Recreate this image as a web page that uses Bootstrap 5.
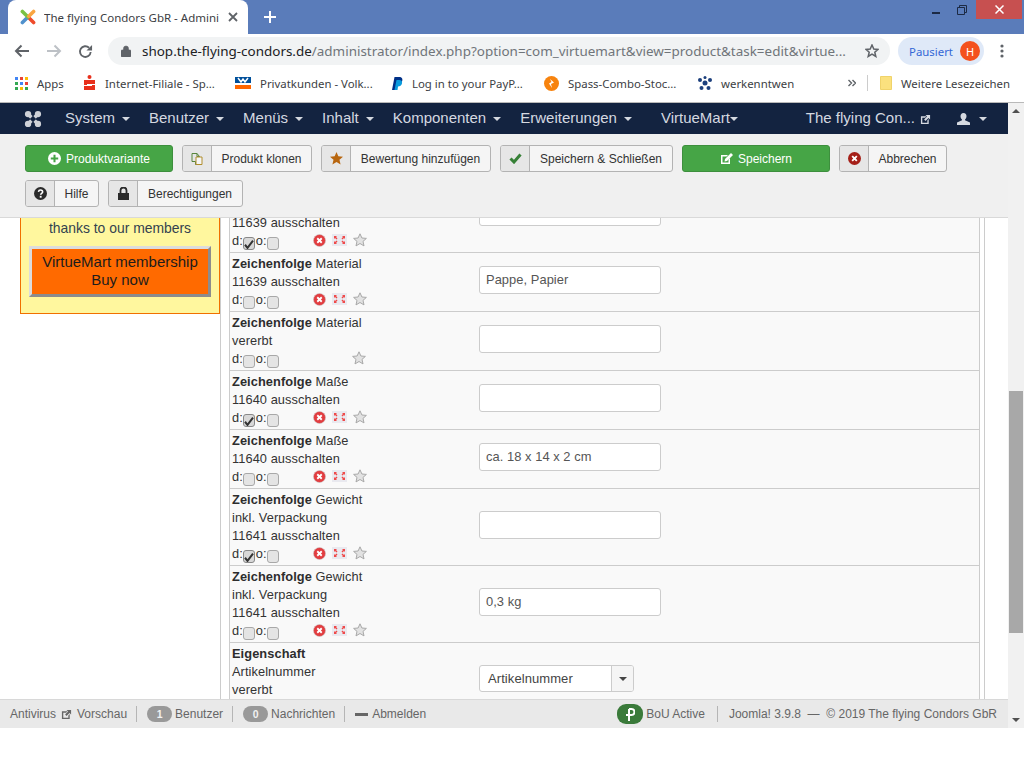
<!DOCTYPE html>
<html lang="de">
<head>
<meta charset="utf-8">
<title>The flying Condors GbR - Administration</title>
<link href="https://cdn.jsdelivr.net/npm/bootstrap@5.3.0/dist/css/bootstrap.min.css" rel="stylesheet">
<style>
html,body{margin:0;height:768px;overflow:hidden;background:#fff}
body{font-family:"Liberation Sans",Arial,sans-serif;font-size:12.8px;color:#333;line-height:1.5}
svg{flex:none}
.shell{width:1024px;height:728px}
.tabstrip{height:34px;background:#5a7cba}
.tabitem{width:240px;height:34px;margin-left:8px;background:#fff;border-radius:8px 8px 0 0;padding:0 10px 0 12px;font:11.5px "Noto Sans",sans-serif;color:#3c4043;flex:none}
.tabtitle{width:180px;white-space:nowrap;overflow:hidden;margin-left:8px;margin-right:4px}
.newtab{margin-left:16px;margin-right:auto}
.wincontrols{height:19px;align-self:flex-start}
.winmin{margin:6px 17px 0 0}
.winclose{width:46px;height:19px;background:#c75050;margin:0 2px 0 9px}
.toolbar-c{height:34px;padding:0 20px 0 14px;background:#fff}
.omnibox{width:782px;height:28px;background:#f1f3f4;border-radius:14px;margin-left:15px;padding:0 11px 0 13px;font:13.45px "Noto Sans",sans-serif;color:#70757a;white-space:nowrap;flex:none}
.omnibox b{font-weight:400;color:#202124}
.urltext{width:712px;margin-left:11px}
.pausedpill{width:86px;height:28px;border-radius:14px;background:#dfe9f8;color:#3367d6;font:11.4px "Noto Sans",sans-serif;margin-left:8px;padding:0 4px 0 11px;flex:none}
.avatar{width:20px;height:20px;border-radius:50%;background:#f4511e;color:#fff;font-size:11px}
.bookmarks{height:35px;padding:0 0 4px 15px;border-bottom:1px solid #b9b9b9;background:#fff;font:11.4px "Noto Sans",sans-serif;color:#3c4043;white-space:nowrap}
.bookmark-a{width:152px}.bookmark-b{width:157px}.bookmark-c{width:152px}.bookmark-d{width:154px}.bookmark-e{width:150px}
.bookmark-apps{width:68px}
.bookmarks svg{margin-right:9px}
.bookmark-sep{width:1px;height:16px;background:#ccc;margin:0 12px 0 2px}
.appcol{width:1008px}
.scrolltrack{width:16px;height:625px;background:#f1f1f1}
.scrollarrow{height:16px;font-size:0}
.scrollthumb{width:14px;height:242px;background:#a8a8a8;margin:272px 1px 79px}
.topnav{height:31px;background:#132340;color:#d5d9e0;font-size:15px;gap:19px;white-space:nowrap}
.topnav .joomla-mark{margin-right:4px;color:#cfd2d8}
.caret-down{display:inline-block;width:0;height:0;border:4px solid transparent;border-top-color:currentColor;border-bottom-width:0;margin-left:7px;vertical-align:middle}
.nav-vm{margin-left:10px}
.nav-site{margin-left:auto;margin-right:7px}
.nav-user{margin-right:21px}
.nav-user .caret-down{margin-left:9px}
.nav-vm .caret-down{margin-left:0}
.nav-site svg{margin-left:5px}
.actionbar{height:84px;background:#f0f0f0;border-bottom:1px solid #d9d9d9;padding:11px 0 0 25px;gap:8px 9px;align-content:flex-start}
.actbtn{height:27px;padding:0;display:flex;align-items:center;font-size:12px;line-height:1;color:#333;background:#f5f5f5;border:1px solid #b3b3b3;border-radius:3px;overflow:hidden;--bs-btn-font-size:12px}
.actbtn .icn{width:29px;height:100%;background:#e6e6e6;border-right:1px solid #b3b3b3;display:flex;align-items:center;justify-content:center;flex:none}
.actbtn .lbl{flex:1;text-align:center}
.actbtn.go{background:#46a546;border-color:#3d8f3d;color:#fff;justify-content:center;gap:5px;width:148px}
.w-clone{width:130px}.w-rate{width:170px}.w-save{width:173px}.w-cancel{width:108px}.w-help{width:74px}.w-perm{width:135px}
.workarea{height:481px;overflow:hidden;background:#fff}
.sidecol{width:221px;padding-left:20px;border-right:1px solid #ccc;flex:none}
.promo{width:200px;height:96px;background:#fff79e;border:1px solid #f07000;border-top:0;text-align:center;font-size:13.9px;line-height:20px;color:#33424f}
.promo-buy{display:block;width:182px;height:51px;margin:8px auto 0;background:#ff6a00;border:3px solid;border-color:#dcdcdc #8c8c8c #8c8c8c #dcdcdc;color:#1c1c1c;font-size:15px;line-height:18px;padding:4px 0}
.fieldcol{margin-left:8px;width:751px;border:1px solid #ccc;border-width:0 1px;background:#f9f9f9;flex:none}
.gutter{width:5px;border-right:1px solid #ccc;flex:none}
.fieldrow{display:flex;align-items:center;padding:0 0 4px 2px;border-bottom:1px solid #ccc;line-height:18px;flex:none;letter-spacing:.08px}
.r59{height:59px}.r77{height:77px}
.scrolled-off{margin-top:-42px}
.fieldlabel{width:247px;flex:none;color:#333;margin-top:4px}
.fieldlabel strong{color:#2d2d2d}
.flagline{display:flex;align-items:center;height:18px}
.flagline .form-check-input{width:12px;height:13px;margin:4px 1px 0 0;background-color:#e4e4e4;border:1px solid #a8a8a8;border-radius:3px;float:none;flex:none;box-shadow:none}
.flagline .form-check-input:checked{background-color:#d8d8d8;border-color:#888;background-size:12px;background-image:url("data:image/svg+xml,%3Csvg xmlns='http://www.w3.org/2000/svg' viewBox='0 0 12 12'%3E%3Cpath d='M2 7l2.500 3L10 3' fill='none' stroke='%23333' stroke-width='2'/%3E%3C/svg%3E")}
.flagicons{display:flex;align-items:center;gap:6px;margin-left:33px;margin-top:-2px}
.flagicons.staronly{margin-left:72px}
.fieldtext{width:182px;height:28px;min-height:0;border:1px solid #ccc;border-radius:3px;padding:0 6px 2px;font-size:12.9px;color:#555;background:#fff;letter-spacing:.05px;flex:none}
.fieldselect{width:155px;height:27px;border:1px solid #ccc;border-radius:3px;background:#fff;color:#444;font-size:13px;overflow:hidden;margin-top:-1px;flex:none}
.fieldselect .sel-val{flex:1;padding-left:8px}
.fieldselect .sel-arrow{width:22px;height:100%;background:#f5f5f5;border-left:1px solid #ccc;color:#444}
.fieldselect .caret-down{margin:0}
.statusline{height:29px;background:#e9e9e9;border-top:1px solid #d8d8d8;color:#666;font-size:12px;padding:0 11px 0 10px;white-space:nowrap}
.vbar{width:1px;height:16px;background:#b5b5b5;margin:0 9px}
.vbar-wide{margin:0 11px 0 12px}
.ext-status{margin:0 5px}
.stat-pill{background:#999;color:#f2f2f2;font-size:10.5px;font-weight:700;width:25px;padding:3px 0;border-radius:9px;margin-right:3px;margin-left:1px}
.bou-pill{width:26px;height:20px;background:#3a7a3a;border-radius:9px;margin-right:3px}
.minusbar{width:13px;height:3px;background:#666;margin:0 4px 0 1px}
.whitefoot{height:40px;background:#fff}
</style>
</head>
<body>
<svg width="0" height="0" class="position-absolute">
<defs>
<symbol id="i-del" viewBox="0 0 14 14"><circle cx="7" cy="7" r="6.500" fill="#e23d40" stroke="#c9c9c9" stroke-width=".6"/><path d="M4.600 4.600l4.800 4.800M9.400 4.600l-4.800 4.800" stroke="#fff" stroke-width="2"/></symbol>
<symbol id="i-fuse" viewBox="0 0 15 12"><rect width="15" height="12" fill="#e9e9ef"/><path d="M2 2h3L4 3l1.500 1.500-1 1L3 4 2 5zM13 2h-3l1 1-1.500 1.500 1 1L12 4l1 1zM2 10h3L4 9l1.500-1.500-1-1L3 8 2 7zM13 10h-3l1-1-1.500-1.500 1-1L12 8l1-1z" fill="#ef4a4a"/></symbol>
<symbol id="i-star" viewBox="0 0 14 14"><path d="M7 .8l1.900 4.200 4.500.4-3.400 3 1 4.500L7 10.500 3 12.900l1-4.500-3.400-3 4.500-.4z" fill="#e2e2e2" stroke="#a8a8a8"/></symbol>
<symbol id="i-ext" viewBox="0 0 12 12"><path d="M1 2.500h6L5.500 4H2.500v5.500h5.500V7L9.500 5.500V11H1zM6 1h5v5L9.300 4.300 6 7.500 4.500 6l3.200-3.300z" fill="currentColor"/></symbol>
</defs>
</svg>
<div class="shell">
  <div class="tabstrip d-flex align-items-center">
    <div class="tabitem d-flex align-items-center">
      <svg width="16" height="16" viewBox="0 0 20 20"><g stroke-width="4.500" stroke-linecap="round"><path d="M17 17l-6-6" stroke="#ef4b2b"/><path d="M3 17l6-6" stroke="#5091cd"/><path d="M3 3l7 7" stroke="#7ac143"/><path d="M17 3l-6 6" stroke="#f9a541"/></g></svg>
      <span class="tabtitle">The flying Condors GbR - Admini</span>
      <svg width="10" height="10" viewBox="0 0 10 10"><path d="M1 1l8 8M9 1l-8 8" stroke="#5f6368" stroke-width="1.800"/></svg>
    </div>
    <svg class="newtab" width="12" height="12" viewBox="0 0 12 12"><path d="M6 0v12M0 6h12" stroke="#fff" stroke-width="2"/></svg>
    <div class="wincontrols d-flex align-items-center">
      <svg class="winmin" width="8" height="2" viewBox="0 0 8 2"><rect width="8" height="2" fill="#1c2a44"/></svg>
      <svg width="10" height="10" viewBox="0 0 10 10"><path d="M.5 2.500h7v7h-7zM2.500 2.500v-2h7v7h-2" fill="none" stroke="#1c2a44"/></svg>
      <div class="winclose d-flex align-items-center justify-content-center"><svg width="9" height="9" viewBox="0 0 9 9"><path d="M.5.500l8 8M8.500.500l-8 8" stroke="#fff" stroke-width="1.500"/></svg></div>
    </div>
  </div>
  <div class="toolbar-c d-flex align-items-center">
    <svg width="16" height="14" viewBox="0 0 16 14" class="me-3"><path d="M15 7H2M7.500 1.500L2 7l5.500 5.500" fill="none" stroke="#5f6368" stroke-width="2"/></svg>
    <svg width="16" height="14" viewBox="0 0 16 14" class="me-3"><path d="M1 7h13M8.500 1.500L14 7l-5.500 5.500" fill="none" stroke="#bdc1c6" stroke-width="2"/></svg>
    <svg width="15" height="15" viewBox="0 0 16 16"><path d="M13.500 8.500A5.700 5.700 0 1 1 11.800 4" fill="none" stroke="#5f6368" stroke-width="2"/><path d="M15 1v6H9z" fill="#5f6368"/></svg>
    <div class="omnibox d-flex align-items-center">
      <svg width="10" height="12" viewBox="0 0 10 12"><path d="M1 5h8a1 1 0 0 1 1 1v5a1 1 0 0 1-1 1H1a1 1 0 0 1-1-1V6a1 1 0 0 1 1-1zM2.500 5V3.500a2.500 2.500 0 0 1 5 0V5" fill="#5f6368" stroke="#5f6368" stroke-width=".6"/></svg>
      <span class="urltext"><b>shop.the-flying-condors.de</b>/administrator/index.php?option=com_virtuemart&amp;view=product&amp;task=edit&amp;virtue...</span>
      <svg class="ms-auto" width="14" height="14" viewBox="0 0 14 14"><path d="M7 1l1.800 4 4.200.4-3.200 2.800 1 4.300L7 10.200l-3.800 2.300 1-4.300L1 5.400 5.200 5z" fill="none" stroke="#5f6368" stroke-width="1.500"/></svg>
    </div>
    <div class="pausedpill d-flex align-items-center justify-content-between"><span>Pausiert</span><span class="avatar d-flex align-items-center justify-content-center">H</span></div>
    <svg class="ms-auto" width="4" height="14" viewBox="0 0 4 14"><circle cx="2" cy="2" r="1.600" fill="#5f6368"/><circle cx="2" cy="7" r="1.600" fill="#5f6368"/><circle cx="2" cy="12" r="1.600" fill="#5f6368"/></svg>
  </div>
  <div class="bookmarks d-flex align-items-center">
    <div class="bookmark-apps d-flex align-items-center">
      <svg width="13" height="13" viewBox="0 0 13 13"><g fill="#4285f4"><rect width="3" height="3"/><rect x="5" y="5" width="3" height="3"/></g><g fill="#ea4335"><rect x="5" width="3" height="3"/><rect x="10" y="5" width="3" height="3"/></g><g fill="#fbbc05"><rect x="10" width="3" height="3"/><rect x="5" y="10" width="3" height="3"/></g><g fill="#34a853"><rect y="5" width="3" height="3"/><rect y="10" width="3" height="3"/><rect x="10" y="10" width="3" height="3"/></g></svg>
      <span>Apps</span>
    </div>
    <div class="bookmark-a d-flex align-items-center">
      <svg width="13" height="16" viewBox="0 0 13 16"><circle cx="6.500" cy="2" r="2" fill="#e8301c"/><path d="M1 5h11v4H4v1h8v5H1v-4h8v-1H1z" fill="#e8301c"/></svg>
      <span>Internet-Filiale - Sp...</span>
    </div>
    <div class="bookmark-b d-flex align-items-center">
      <svg width="16" height="12" viewBox="0 0 16 12"><rect width="16" height="6" fill="#00509b"/><rect y="8" width="16" height="4" fill="#f60"/><path d="M3 1l3 4 2-3 2 3 3-4" fill="none" stroke="#fff" stroke-width="1.500"/></svg>
      <span>Privatkunden - Volk...</span>
    </div>
    <div class="bookmark-c d-flex align-items-center">
      <svg width="11" height="13" viewBox="0 0 11 13"><path d="M2.500 0H7c3 0 4 2 3 4.500C9 7 7 7.500 5 7.500L4 13H0z" fill="#003087"/><path d="M4.500 3h3C9 3 10.500 4 10 6.500 9.500 8.500 8 9.500 6 9.500L5.500 13H2.500z" fill="#0a9bdd"/></svg>
      <span>Log in to your PayP...</span>
    </div>
    <div class="bookmark-d d-flex align-items-center">
      <svg width="15" height="15" viewBox="0 0 15 15"><circle cx="7.500" cy="7.500" r="7.500" fill="#f7830e"/><path d="M6 3l4 3.500L7 8l1 4-3-4.500 2.500-1.500z" fill="#fff"/></svg>
      <span>Spass-Combo-Stoc...</span>
    </div>
    <div class="bookmark-e d-flex align-items-center">
      <svg width="14" height="14" viewBox="0 0 14 14"><g fill="#1c3f7c"><circle cx="7" cy="7" r="2.500"/><circle cx="2" cy="4" r="2"/><circle cx="12" cy="4" r="2"/><circle cx="3.500" cy="12" r="2"/><circle cx="10.500" cy="12" r="2"/><circle cx="7" cy="1.500" r="1.500"/></g></svg>
      <span>werkenntwen</span>
    </div>
    <svg width="8" height="8" viewBox="0 0 8 8"><path d="M.5 1l3 3-3 3M4.500 1l3 3-3 3" fill="none" stroke="#5f6368" stroke-width="1.400"/></svg>
    <span class="bookmark-sep"></span>
    <svg width="12" height="14" viewBox="0 0 12 14"><path d="M.5.500h11v13H.5z" fill="#fbe17e" stroke="#f0d36a"/></svg>
    <span>Weitere Lesezeichen</span>
  </div>
  <div class="d-flex">
    <div class="appcol">
      <nav class="topnav navbar p-0 ps-4 justify-content-start flex-nowrap">
        <svg class="joomla-mark" width="18" height="18" viewBox="0 0 20 20"><g fill="currentColor"><circle cx="4.500" cy="4.500" r="3.500"/><circle cx="15.500" cy="4.500" r="3.500"/><circle cx="4.500" cy="15.500" r="3.500"/><circle cx="15.500" cy="15.500" r="3.500"/></g><path d="M4.500 4.500l11 11M15.500 4.500l-11 11" stroke="currentColor" stroke-width="4"/><path d="M10 6.500L13.500 10 10 13.500 6.500 10z" fill="#132340"/></svg>
        <span>System<span class="caret-down"></span></span>
        <span>Benutzer<span class="caret-down"></span></span>
        <span>Menüs<span class="caret-down"></span></span>
        <span>Inhalt<span class="caret-down"></span></span>
        <span>Komponenten<span class="caret-down"></span></span>
        <span>Erweiterungen<span class="caret-down"></span></span>
        <span class="nav-vm">VirtueMart<span class="caret-down"></span></span>
        <span class="nav-site">The flying Con...<svg width="11" height="11"><use href="#i-ext"/></svg></span>
        <span class="nav-user"><svg width="13" height="12" viewBox="0 0 13 12"><path d="M6.500 0C8.500 0 9.500 1.500 9.500 3.200c0 1.600-.8 2.800-1.500 3.300v.8L13 9.500V12H0V9.500l5-2.200v-.8C4.300 6 3.500 4.800 3.500 3.200 3.500 1.500 4.500 0 6.500 0z" fill="currentColor"/></svg><span class="caret-down"></span></span>
      </nav>
      <div class="actionbar d-flex flex-wrap">
        <button type="button" class="btn actbtn go"><svg width="13" height="13" viewBox="0 0 14 14"><circle cx="7" cy="7" r="7" fill="#fff"/><path d="M7 3v8M3 7h8" stroke="#46a546" stroke-width="2.200"/></svg>Produktvariante</button>
        <button type="button" class="btn actbtn w-clone"><span class="icn"><svg width="12" height="12" viewBox="0 0 12 12"><path d="M1 .5h5v3h2.500v8H4.500v-3H1zM6 .5L8.500 3.500" fill="none" stroke="#56843c"/><path d="M5 4h6v7.500H5z" fill="#f5f5f5" stroke="#b08d2c"/></svg></span><span class="lbl">Produkt klonen</span></button>
        <button type="button" class="btn actbtn w-rate"><span class="icn"><svg width="13" height="13" viewBox="0 0 14 14"><path d="M7 0l2 4.700 5 .4-3.800 3.300L11.400 13.500 7 10.800l-4.400 2.700 1.200-5.100L0 5.100l5-.4z" fill="#b8660f"/></svg></span><span class="lbl">Bewertung hinzufügen</span></button>
        <button type="button" class="btn actbtn w-save"><span class="icn"><svg width="13" height="11" viewBox="0 0 13 11"><path d="M1.500 5.500l3.500 3.500 6.500-7.500" fill="none" stroke="#378137" stroke-width="3"/></svg></span><span class="lbl">Speichern &amp; Schließen</span></button>
        <button type="button" class="btn actbtn go"><svg width="13" height="12" viewBox="0 0 13 12"><path d="M1 2h7L6.500 3.500H2.500v6h6V6.500L10 5v6H1z" fill="#fff"/><path d="M5 6l6-6 2 2-6 6-2.500.5z" fill="#fff"/></svg>Speichern</button>
        <button type="button" class="btn actbtn w-cancel"><span class="icn"><svg width="13" height="13" viewBox="0 0 14 14"><circle cx="7" cy="7" r="7" fill="#a51f18"/><path d="M4.500 4.500l5 5M9.500 4.500l-5 5" stroke="#fff" stroke-width="2"/></svg></span><span class="lbl">Abbrechen</span></button>
        <button type="button" class="btn actbtn w-help"><span class="icn"><svg width="13" height="13" viewBox="0 0 14 14"><circle cx="7" cy="7" r="7" fill="#2b2b2b"/><path d="M4.800 5.200C5 3.800 6 3.300 7 3.300c1.300 0 2.300.8 2.300 2 0 1.500-2.100 1.500-2.100 3" fill="none" stroke="#fff" stroke-width="1.700"/><rect x="6.200" y="9.500" width="2" height="2" fill="#fff"/></svg></span><span class="lbl">Hilfe</span></button>
        <button type="button" class="btn actbtn w-perm"><span class="icn"><svg width="11" height="13" viewBox="0 0 11 13"><path d="M0 6h11v7H0z" fill="#2b2b2b"/><path d="M2.500 6V3.500a3 3 0 0 1 6 0V6" fill="none" stroke="#2b2b2b" stroke-width="1.800"/></svg></span><span class="lbl">Berechtigungen</span></button>
      </div>
      <div class="workarea d-flex">
        <aside class="sidecol">
          <div class="promo">
            <div>thanks to our members</div>
            <span class="promo-buy">VirtueMart membership<br>Buy now</span>
          </div>
        </aside>
        <main class="fieldcol d-flex flex-column">
          <div class="fieldrow r77 scrolled-off">
            <div class="fieldlabel">
              <div>&nbsp;</div>
              <div>&nbsp;</div>
              <div>11639 ausschalten</div>
              <div class="flagline">d:<input class="form-check-input" type="checkbox" checked aria-label="d">o:<input class="form-check-input" type="checkbox" aria-label="o"><span class="flagicons"><svg width="13" height="13"><use href="#i-del"/></svg><svg width="15" height="12"><use href="#i-fuse"/></svg><svg width="14" height="14"><use href="#i-star"/></svg></span></div>
            </div>
            <input class="form-control fieldtext" type="text" aria-label="Wert">
          </div>
          <div class="fieldrow r59">
            <div class="fieldlabel">
              <div><strong>Zeichenfolge</strong> Material</div>
              <div>11639 ausschalten</div>
              <div class="flagline">d:<input class="form-check-input" type="checkbox" aria-label="d">o:<input class="form-check-input" type="checkbox" aria-label="o"><span class="flagicons"><svg width="13" height="13"><use href="#i-del"/></svg><svg width="15" height="12"><use href="#i-fuse"/></svg><svg width="14" height="14"><use href="#i-star"/></svg></span></div>
            </div>
            <input class="form-control fieldtext" type="text" value="Pappe, Papier" aria-label="Wert">
          </div>
          <div class="fieldrow r59">
            <div class="fieldlabel">
              <div><strong>Zeichenfolge</strong> Material</div>
              <div>vererbt</div>
              <div class="flagline">d:<input class="form-check-input" type="checkbox" aria-label="d">o:<input class="form-check-input" type="checkbox" aria-label="o"><span class="flagicons staronly"><svg width="14" height="14"><use href="#i-star"/></svg></span></div>
            </div>
            <input class="form-control fieldtext" type="text" aria-label="Wert">
          </div>
          <div class="fieldrow r59">
            <div class="fieldlabel">
              <div><strong>Zeichenfolge</strong> Maße</div>
              <div>11640 ausschalten</div>
              <div class="flagline">d:<input class="form-check-input" type="checkbox" checked aria-label="d">o:<input class="form-check-input" type="checkbox" aria-label="o"><span class="flagicons"><svg width="13" height="13"><use href="#i-del"/></svg><svg width="15" height="12"><use href="#i-fuse"/></svg><svg width="14" height="14"><use href="#i-star"/></svg></span></div>
            </div>
            <input class="form-control fieldtext" type="text" aria-label="Wert">
          </div>
          <div class="fieldrow r59">
            <div class="fieldlabel">
              <div><strong>Zeichenfolge</strong> Maße</div>
              <div>11640 ausschalten</div>
              <div class="flagline">d:<input class="form-check-input" type="checkbox" aria-label="d">o:<input class="form-check-input" type="checkbox" aria-label="o"><span class="flagicons"><svg width="13" height="13"><use href="#i-del"/></svg><svg width="15" height="12"><use href="#i-fuse"/></svg><svg width="14" height="14"><use href="#i-star"/></svg></span></div>
            </div>
            <input class="form-control fieldtext" type="text" value="ca. 18 x 14 x 2 cm" aria-label="Wert">
          </div>
          <div class="fieldrow r77">
            <div class="fieldlabel">
              <div><strong>Zeichenfolge</strong> Gewicht</div>
              <div>inkl. Verpackung</div>
              <div>11641 ausschalten</div>
              <div class="flagline">d:<input class="form-check-input" type="checkbox" checked aria-label="d">o:<input class="form-check-input" type="checkbox" aria-label="o"><span class="flagicons"><svg width="13" height="13"><use href="#i-del"/></svg><svg width="15" height="12"><use href="#i-fuse"/></svg><svg width="14" height="14"><use href="#i-star"/></svg></span></div>
            </div>
            <input class="form-control fieldtext" type="text" aria-label="Wert">
          </div>
          <div class="fieldrow r77">
            <div class="fieldlabel">
              <div><strong>Zeichenfolge</strong> Gewicht</div>
              <div>inkl. Verpackung</div>
              <div>11641 ausschalten</div>
              <div class="flagline">d:<input class="form-check-input" type="checkbox" aria-label="d">o:<input class="form-check-input" type="checkbox" aria-label="o"><span class="flagicons"><svg width="13" height="13"><use href="#i-del"/></svg><svg width="15" height="12"><use href="#i-fuse"/></svg><svg width="14" height="14"><use href="#i-star"/></svg></span></div>
            </div>
            <input class="form-control fieldtext" type="text" value="0,3 kg" aria-label="Wert">
          </div>
          <div class="fieldrow r77">
            <div class="fieldlabel">
              <div><strong>Eigenschaft</strong></div>
              <div>Artikelnummer</div>
              <div>vererbt</div>
              <div class="flagline">&nbsp;</div>
            </div>
            <div class="fieldselect d-flex align-items-center"><span class="sel-val">Artikelnummer</span><span class="sel-arrow d-flex align-items-center justify-content-center"><span class="caret-down"></span></span></div>
          </div>
        </main>
        <div class="gutter"></div>
      </div>
      <footer class="statusline d-flex align-items-center">
        <span>Antivirus</span>
        <svg width="11" height="11" class="ext-status"><use href="#i-ext"/></svg>
        <span>Vorschau</span><span class="vbar"></span>
        <span class="badge stat-pill">1</span><span>Benutzer</span><span class="vbar"></span>
        <span class="badge stat-pill">0</span><span>Nachrichten</span><span class="vbar"></span>
        <span class="minusbar"></span><span>Abmelden</span>
        <span class="bou-pill d-flex align-items-center justify-content-center ms-auto"><svg width="10" height="15" viewBox="0 0 10 15"><path d="M4 14V2M4 2h2.500a2.500 2.500 0 0 1 0 6H1" fill="none" stroke="#fff" stroke-width="2"/></svg></span>
        <span>BoU Active</span><span class="vbar vbar-wide"></span>
        <span>Joomla! 3.9.8 &nbsp;—&nbsp; © 2019 The flying Condors GbR</span>
      </footer>
    </div>
    <div class="scrolltrack d-flex flex-column">
      <div class="scrollarrow d-flex justify-content-center align-items-center"><svg width="8" height="4" viewBox="0 0 8 4"><path d="M0 4l4-4 4 4z" fill="#505050"/></svg></div>
      <div class="scrollthumb"></div>
      <div class="scrollarrow d-flex justify-content-center align-items-center"><svg width="8" height="4" viewBox="0 0 8 4"><path d="M0 0l4 4 4-4z" fill="#505050"/></svg></div>
    </div>
  </div>
  <div class="whitefoot"></div>
</div>
</body>
</html>
